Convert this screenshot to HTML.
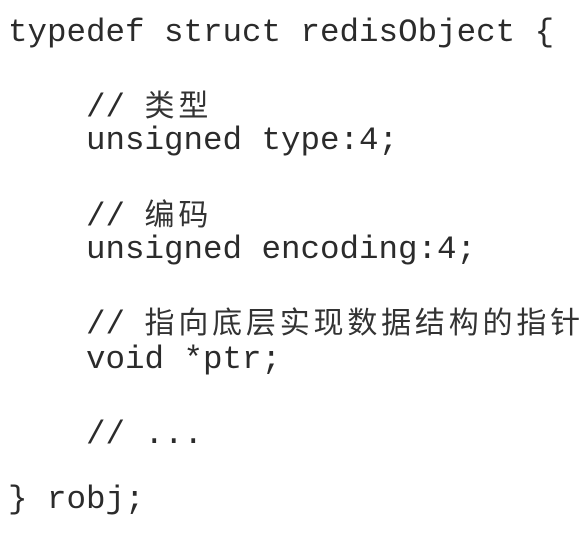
<!DOCTYPE html>
<html><head><meta charset="utf-8"><style>
html,body{margin:0;padding:0;background:#fff;width:587px;height:535px;overflow:hidden}
.l{position:absolute;left:8px;height:40px;line-height:40px;font-family:"Liberation Mono","Noto Sans CJK SC",monospace;font-size:32.5px;color:#2b2b2b;white-space:pre}
.i{left:86px}
.c{font-family:"Noto Sans CJK SC","WenQuanYi Zen Hei",sans-serif;font-size:30px;letter-spacing:3.8px;color:#333}
</style></head><body>
<div class="l" style="top:13px">typedef struct redisObject {</div>
<div class="l i" style="top:83px">// <span class="c">类型</span></div>
<div class="l i" style="top:121px">unsigned type:4;</div>
<div class="l i" style="top:192px">// <span class="c">编码</span></div>
<div class="l i" style="top:230px">unsigned encoding:4;</div>
<div class="l i" style="top:300px">// <span class="c">指向底层实现数据结构的指针</span></div>
<div class="l i" style="top:340px">void *ptr;</div>
<div class="l i" style="top:415px">// ...</div>
<div class="l" style="top:480px">} robj;</div>
</body></html>
